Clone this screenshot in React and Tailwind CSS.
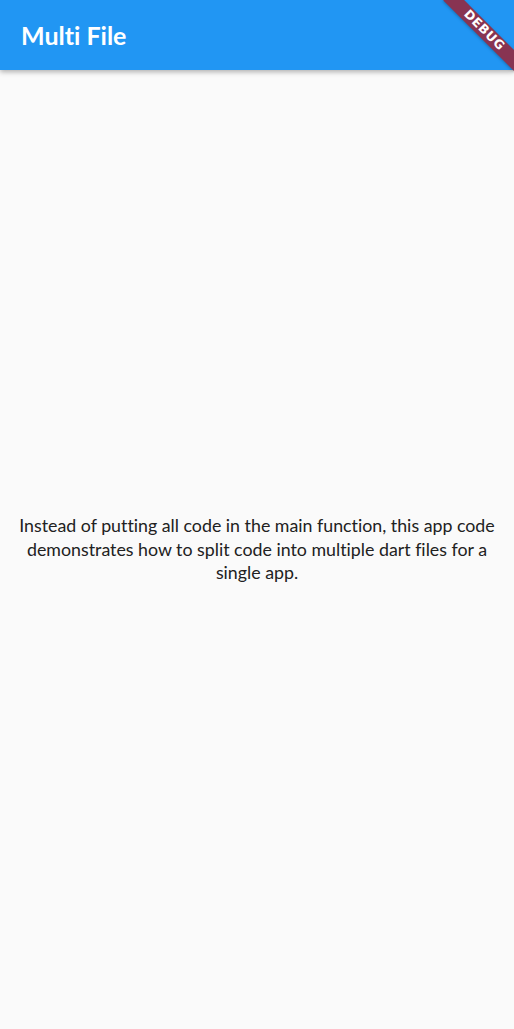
// Flutter風のシンプルな画面
export default function App() {
  return (
    <div
      className="relative flex h-[1029px] w-full flex-col overflow-hidden bg-[#fafafa] [font-variant-ligatures:none]"
      style={{ fontFamily: "Lato, 'Noto Sans', sans-serif" }}
    >
      {/* アプリバー */}
      <header className="relative z-10 flex h-[70px] shrink-0 items-center bg-[#2196f3] px-[21px] shadow-[0_2px_5px_rgba(0,0,0,0.3)]">
        <h1 className="text-[25px] font-bold leading-none text-white">Multi File</h1>
      </header>

      {/* 本文 */}
      <main className="flex flex-1 items-center justify-center px-[18px]">
        <p className="text-center text-[17.8px] leading-[23.5px] text-[#212121]">
          Instead of putting all code in the main function, this app code demonstrates how to split
          code into multiple dart files for a single app.
        </p>
      </main>

      {/* デバッグバナー */}
      <div className="absolute right-[-20px] top-[22.5px] z-20 flex h-[15px] w-[100px] rotate-45 items-center justify-center bg-[#883452] shadow-[0_1px_3px_rgba(0,0,0,0.25)]">
        <span
          className="text-[12.5px] font-bold leading-none tracking-[0.6px] text-white"
          style={{ fontFamily: "'DejaVu Sans', sans-serif" }}
        >
          DEBUG
        </span>
      </div>
    </div>
  );
}
